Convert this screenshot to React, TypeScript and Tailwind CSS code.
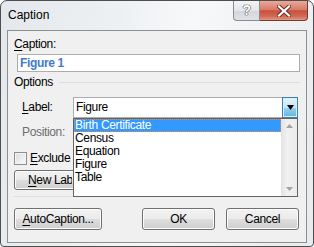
const Btn = ({ children, className = "" }: { children?: React.ReactNode; className?: string }) => (
  <div
    className={`flex items-center justify-center rounded-[3px] border border-[#707070] bg-[linear-gradient(180deg,#f2f2f2_0%,#ebebeb_48%,#dddddd_52%,#cfcfcf_100%)] shadow-[inset_0_0_0_1px_#fcfcfc] ${className}`}
  >
    {children}
  </div>
);

const Combo = ({ value }: { value?: string }) => (
  <div className="relative flex h-[21px] w-[225px] items-center border border-[#abadb3] bg-white pl-[2px]">
    {value && <span>{value}</span>}
    <div className="absolute right-[-1px] top-[-1px] flex h-[21px] w-[16px] items-center justify-center border border-[#3c7fb1] bg-[linear-gradient(180deg,#e5f4fc_0%,#c4e5f6_50%,#98d1ef_51%,#68b3db_100%)] shadow-[inset_0_0_0_1px_#d8eefa]">
      <svg width="7" height="5" viewBox="0 0 7 5">
        <path d="M0 0H7L3.5 5Z" fill="#000" />
      </svg>
    </div>
  </div>
);

const items = ["Birth Certificate", "Census", "Equation", "Figure", "Table"];

export default function App() {
  return (
    <div className="h-[247px] w-[314px] bg-white font-['Liberation_Sans',Arial,sans-serif] text-[12px] leading-[15px] tracking-[-0.35px] text-black">
      <div className="relative flex h-[247px] w-[314px] flex-col rounded-t-[7px] rounded-b-[4px] border border-[#4e4e4e] bg-[linear-gradient(100deg,#e4e7eb_0%,#eef1f4_35%,#f7f8fa_55%,#e8ebee_100%)] px-[6px] pb-[3px]">
        {/* title bar */}
        <div className="flex h-[29px] shrink-0 items-center pl-[1px] text-[12px] tracking-normal text-black">Caption</div>
        <div className="absolute right-[5px] top-0 flex h-[20px]">
          <div className="flex w-[27px] items-center justify-center rounded-bl-[4px] border border-t-0 border-[#8a8c90] bg-[linear-gradient(180deg,#f3f4f6_0%,#e3e6ea_50%,#d2d6dc_51%,#dfe3e8_100%)] text-[14px] font-bold text-white [text-shadow:0_0_1px_#444,0_0_1px_#444,0_0_1px_#444]">
            ?
          </div>
          <div className="flex w-[48px] items-center justify-center rounded-br-[4px] border border-l-0 border-t-0 border-[#7a3a32] bg-[linear-gradient(180deg,#e9a99b_0%,#d87b69_45%,#c6503e_52%,#d06a55_80%,#e29886_100%)]">
            <svg width="14" height="12" viewBox="0 0 14 12">
              <path d="M2 1.5L12 10.5M12 1.5L2 10.5" stroke="#6b2a22" strokeWidth="4" strokeLinecap="square" />
              <path d="M2 1.5L12 10.5M12 1.5L2 10.5" stroke="#fff" strokeWidth="2.2" strokeLinecap="square" />
            </svg>
          </div>
        </div>

        {/* client area */}
        <div className="relative flex h-[213px] flex-col border border-[#8e8f8f] bg-[#f0f0f0]">
          <div className="pl-[6px] pt-[6px]">
            <span className="underline underline-offset-2">C</span>aption:
          </div>
          <div className="ml-[9px] mr-[6px] mt-[2px] flex h-[18px] items-center border border-[#abadb3] bg-white pl-[2px] font-bold text-[#3f7bcc]">
            Figure 1
          </div>

          <div className="mt-[3px] flex items-center pl-[6px] pr-[6px]">
            <span>Options</span>
            <div className="ml-[6px] h-px flex-1 bg-[#d5dfe5]" />
          </div>

          <div className="mt-[7px] flex flex-col gap-[4px] pl-[14px]">
            <div className="flex items-center">
              <span className="w-[51px]">
                <span className="underline underline-offset-2">L</span>abel:
              </span>
              <Combo value="Figure" />
            </div>
            <div className="flex items-center">
              <span className="w-[51px] text-[#6d6d6d]">Position:</span>
              <Combo />
            </div>
          </div>

          <div className="mt-[9px] flex h-[13px] items-center pl-[6px]">
            <div className="h-[13px] w-[13px] border border-[#8e8f8f] bg-[linear-gradient(135deg,#dcdcdc,#fbfbfb)] shadow-[inset_0_0_0_1px_#f4f4f4]" />
            <span className="ml-[3px] w-[43px] overflow-hidden whitespace-nowrap">
              <span className="underline underline-offset-2">E</span>xclude l
            </span>
          </div>

          <div className="mt-[5px] flex pl-[6px]">
            <Btn className="h-[20px] w-[88px] justify-start pl-[13px]">
              <span className="w-[44px] overflow-hidden whitespace-nowrap">
                <span className="underline underline-offset-2">N</span>ew Labe
              </span>
            </Btn>
          </div>

          <div className="ml-[6px] mr-[5px] mt-[6px] h-px bg-[#d5dfe5]" />

          <div className="mt-[11px] flex pl-[6px] pr-[7px]">
            <Btn className="h-[22px] w-[88px]">
              <span>
                <span className="underline underline-offset-2">A</span>utoCaption...
              </span>
            </Btn>
            <Btn className="ml-auto h-[22px] w-[73px]">OK</Btn>
            <Btn className="ml-[11px] h-[22px] w-[73px]">Cancel</Btn>
          </div>

          {/* open dropdown list */}
          <div className="absolute left-[65px] top-[87px] flex h-[79px] w-[225px] border border-[#646464] bg-white">
            <div className="flex flex-1 flex-col">
              {items.map((it, i) => (
                <div
                  key={it}
                  className={
                    i === 0
                      ? "h-[13px] border border-dotted border-[#e0903a] bg-[#3399ff] leading-[11px] text-white"
                      : "h-[13px] pl-[1px] leading-[13px]"
                  }
                >
                  {it}
                </div>
              ))}
            </div>
            <div className="flex w-[16px] flex-col items-center justify-between bg-[linear-gradient(90deg,#e3e3e3,#f1f1f1_40%,#ececec)] py-[5px]">
              <svg width="7" height="4" viewBox="0 0 7 4">
                <path d="M3.5 0L7 4H0Z" fill="#a3a3a3" />
              </svg>
              <svg width="7" height="4" viewBox="0 0 7 4">
                <path d="M0 0H7L3.5 4Z" fill="#a3a3a3" />
              </svg>
            </div>
          </div>
        </div>
      </div>
    </div>
  );
}
